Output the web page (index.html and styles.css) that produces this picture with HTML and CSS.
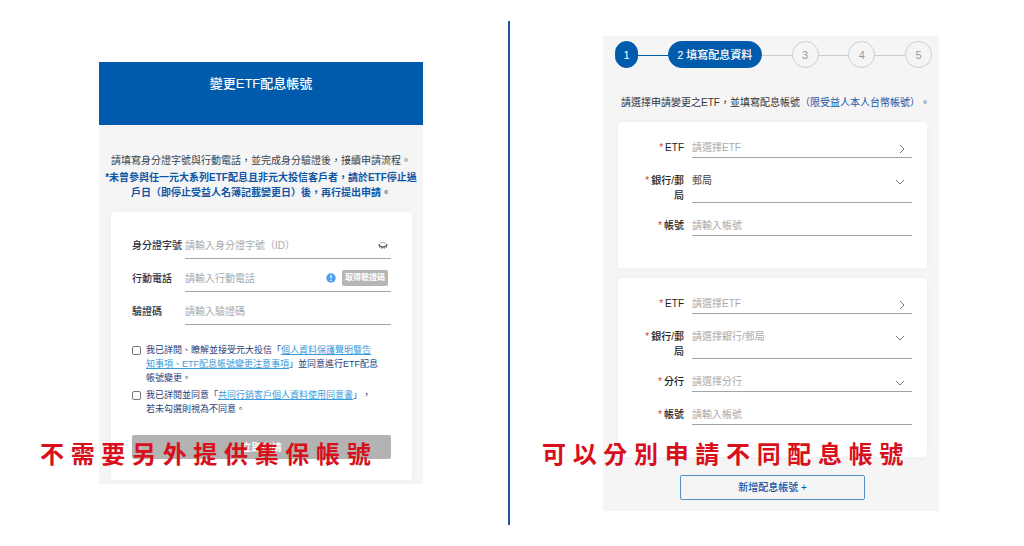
FILE: index.html
```html
<!DOCTYPE html>
<html lang="zh-Hant">
<head>
    <meta charset="UTF-8">
    <meta name="viewport" content="width=device-width, initial-scale=1.0">
    <title>變更ETF配息帳號</title>
    <link rel="stylesheet" href="styles.css">
</head>
<body>
    <main class="compare">
        <!-- Identity check -->
        <section class="side">
            <div class="panel verify">
                <header class="verify-header">
                    <h1 class="verify-title">變更ETF配息帳號</h1>
                </header>
                <div class="intro">
                    <p>請填寫身分證字號與行動電話，並完成身分驗證後，接續申請流程。</p>
                    <p class="intro-note">*未曾參與任一元大系列ETF配息且非元大投信客戶者，請於ETF停止過戶日（即停止受益人名簿記載變更日）後，再行提出申請。</p>
                </div>
                <form class="card verify-card">
                    <div class="row">
                        <label for="idNumber">身分證字號</label>
                        <div class="control">
                            <input type="text" id="idNumber" placeholder="請輸入身分證字號（ID）">
                            <button type="button" class="icon-button" aria-label="顯示">
                                <svg width="10" height="9" viewBox="0 0 10 9" fill="none">
                                    <path d="M1 4C2 .5 8 .5 9 4" stroke="#999" stroke-width=".8"/>
                                    <path d="M.8 3.500C2 7 8 7 9.200 3.500" stroke="#444" stroke-width="1.100"/>
                                    <path d="M2 5.500L1.200 6.800M4 6.300L3.700 7.900M6 6.300L6.300 7.900M8 5.500L8.800 6.800" stroke="#666" stroke-width=".8"/>
                                </svg>
                            </button>
                        </div>
                    </div>
                    <div class="row">
                        <label for="phone">行動電話</label>
                        <div class="control">
                            <input type="text" id="phone" placeholder="請輸入行動電話">
                            <svg class="info" width="10" height="10" viewBox="0 0 10 10">
                                <circle cx="5" cy="5" r="4.700" fill="#4f9fee"/>
                                <path d="M5 2v3.500M5 6.800v1.200" stroke="#fff" stroke-width="1.300"/>
                            </svg>
                            <button type="button" class="code-button">取得驗證碼</button>
                        </div>
                    </div>
                    <div class="row">
                        <label for="code">驗證碼</label>
                        <div class="control">
                            <input type="text" id="code" placeholder="請輸入驗證碼">
                        </div>
                    </div>

                    <div class="terms">
                        <div class="term">
                            <input type="checkbox" id="agreePrivacy">
                            <label for="agreePrivacy">我已詳閱、瞭解並接受元大投信「<a href="#">個人資料保護聲明暨告知事項、ETF配息帳號變更注意事項</a>」並同意進行ETF配息帳號變更。</label>
                        </div>
                        <div class="term">
                            <input type="checkbox" id="agreeMarketing">
                            <label for="agreeMarketing">我已詳閱並同意「<a href="#">共同行銷客戶個人資料使用同意書</a>」，若未勾選則視為不同意。</label>
                        </div>
                    </div>
                    <button type="submit" class="submit">立即申請</button>
                </form>
            </div>
            <p class="caption caption-left">不 需 要 另 外 提 供 集 保 帳 號</p>
        </section>

        <div class="divider"></div>

        <!-- Payout accounts -->
        <section class="side">
            <div class="panel payout">
                <ol class="steps">
                    <li class="step done">1</li>
                    <li class="step active">2 填寫配息資料</li>
                    <li class="step">3</li>
                    <li class="step">4</li>
                    <li class="step">5</li>
                </ol>
                <p class="hint">請選擇申請變更之ETF，並填寫配息帳號<span>（限受益人本人台幣帳號）</span>。</p>

                <form class="accounts">
                    <div class="card account">
                        <div class="row">
                            <label for="etf1"><i>*</i>ETF</label>
                            <div class="control">
                                <input type="text" id="etf1" placeholder="請選擇ETF" readonly>
                                <svg class="arrow" width="6" height="10" viewBox="0 0 6 10"><path d="M1 1l4 4-4 4"/></svg>
                            </div>
                        </div>
                        <div class="row">
                            <label for="bank1"><i>*</i>銀行/郵局</label>
                            <div class="control">
                                <select id="bank1">
                                    <option>郵局</option>
                                </select>
                                <svg class="arrow" width="10" height="10" viewBox="0 0 10 10"><path d="M1 3l4 4 4-4"/></svg>
                            </div>
                        </div>
                        <div class="row">
                            <label for="account1"><i>*</i>帳號</label>
                            <div class="control">
                                <input type="text" id="account1" placeholder="請輸入帳號">
                            </div>
                        </div>
                    </div>

                    <div class="card account">
                        <div class="row">
                            <label for="etf2"><i>*</i>ETF</label>
                            <div class="control">
                                <input type="text" id="etf2" placeholder="請選擇ETF" readonly>
                                <svg class="arrow" width="6" height="10" viewBox="0 0 6 10"><path d="M1 1l4 4-4 4"/></svg>
                            </div>
                        </div>
                        <div class="row">
                            <label for="bank2"><i>*</i>銀行/郵局</label>
                            <div class="control">
                                <select id="bank2" class="empty">
                                    <option>請選擇銀行/郵局</option>
                                </select>
                                <svg class="arrow" width="10" height="10" viewBox="0 0 10 10"><path d="M1 3l4 4 4-4"/></svg>
                            </div>
                        </div>
                        <div class="row">
                            <label for="branch2"><i>*</i>分行</label>
                            <div class="control">
                                <select id="branch2" class="empty">
                                    <option>請選擇分行</option>
                                </select>
                                <svg class="arrow" width="10" height="10" viewBox="0 0 10 10"><path d="M1 3l4 4 4-4"/></svg>
                            </div>
                        </div>
                        <div class="row">
                            <label for="account2"><i>*</i>帳號</label>
                            <div class="control">
                                <input type="text" id="account2" placeholder="請輸入帳號">
                            </div>
                        </div>
                    </div>
                    <button type="button" class="add-account">新增配息帳號 +</button>
                </form>
            </div>
            <p class="caption caption-right">可 以 分 別 申 請 不 同 配 息 帳 號</p>
        </section>
    </main>
</body>
</html>
```

FILE: styles.css
```css
* {
    box-sizing: border-box;
}

body {
    margin: 0;
    background-color: #fff;
    color: #3a4149;
    font-family: "Liberation Sans", "Noto Sans CJK TC", sans-serif;
    font-size: 10px;
    line-height: 15px;
    text-spacing-trim: space-all;
}

h1, p, ol {
    margin: 0;
    padding: 0;
}

input, select, button {
    font: inherit;
    color: inherit;
    margin: 0;
    padding: 0;
    border: 0;
    background: none;
}

.compare {
    display: grid;
    grid-template-columns: 1fr 2px 1fr;
    padding: 21px 6px 21px 0;
}

.divider {
    background-color: #1a56a0;
}

.side {
    position: relative;
    padding: 0 0 14px 14px;
}

.panel {
    margin: 0 auto;
    background-color: #f5f5f6;
}

.card {
    background-color: #fff;
    border-radius: 4px;
    box-shadow: 0 0 8px rgba(0, 0, 0, 0.03);
}

.row {
    display: flex;
}

.control {
    display: flex;
    flex: 1;
    min-width: 0;
    border-bottom: 1px solid #a4a4a4;
}

.control input,
.control select {
    flex: 1;
    min-width: 0;
    outline: none;
    appearance: none;
}

.control input::placeholder,
.control .empty {
    color: #a9a9a9;
    opacity: 1;
}

/* Left panel */
.verify {
    max-width: 324px;
    margin-top: 41px;
    padding-bottom: 4px;
}

.verify-header {
    background-color: #005bac;
    padding: 12px 0 31px;
}

.verify-title {
    color: #fff;
    font-size: 13px;
    font-weight: 500;
    line-height: 20px;
    text-align: center;
}

.intro {
    padding: 28px 5px 12px;
    text-align: center;
}

.intro-note {
    margin-top: 2px;
    color: #0f56a5;
    font-weight: bold;
}

.verify-card {
    margin: 0 11px 0 12px;
    padding: 20px 21px 21px;
}

.verify-card .row {
    height: 27px;
    margin-bottom: 6px;
    line-height: 27px;
}

.verify-card .row label {
    flex: 0 0 53px;
    color: #26344a;
    font-weight: 500;
}

.verify-card .control {
    align-items: center;
}

.icon-button {
    display: flex;
    margin-right: 3px;
}

.info {
    margin-right: 6px;
}

.code-button {
    width: 46px;
    height: 16px;
    margin-right: 3px;
    border-radius: 2px;
    background-color: #b5b5b5;
    color: #fff;
    font-size: 8px;
    font-weight: bold;
    line-height: 16px;
}

.terms {
    margin-top: 18px;
    color: #1f3c78;
    font-size: 9px;
    line-height: 14px;
}

.term {
    display: flex;
    align-items: flex-start;
    gap: 5px;
    margin-bottom: 3px;
}

.term input {
    flex: none;
    width: 9px;
    height: 9px;
    margin-top: 3px;
    border: 1px solid #777;
    border-radius: 2px;
    appearance: none;
}

.term label {
    max-width: 233px;
}

.term a {
    color: #3a9bdc;
}

.submit {
    display: block;
    width: 100%;
    height: 24px;
    margin-top: 19px;
    border-radius: 2px;
    background-color: #b3b3b3;
    color: #fff;
    font-weight: bold;
}

/* Right panel */
.payout {
    max-width: 336px;
    margin-top: 15px;
    padding-bottom: 11px;
}

.steps {
    display: flex;
    justify-content: space-between;
    padding: 5px 7px 0 12px;
    list-style: none;
    font-size: 11px;
    background: linear-gradient(#c9cdd2, #c9cdd2) center 19px / 300px 1px no-repeat;
}

.step {
    width: 27px;
    height: 27px;
    border: 1px solid #c9cdd2;
    border-radius: 14px;
    background-color: #f5f5f6;
    color: #999;
    line-height: 26px;
    text-align: center;
}

.step.done,
.step.active {
    border-color: #005bac;
    background-color: #005bac;
    color: #fff;
}

.step.done {
    position: relative;
    width: 23px;
}

/* finished part of the track */
.step.done::after {
    content: "";
    position: absolute;
    left: 22px;
    top: 13px;
    width: 31px;
    height: 1px;
    background-color: #005bac;
}

.step.active {
    width: 94px;
    font-weight: 500;
}

.hint {
    padding: 27px 0 12px 18px;
    color: #333;
    white-space: nowrap;
}

.hint span {
    color: #0f56a5;
}

.accounts {
    display: flex;
    flex-direction: column;
    gap: 10px;
    padding: 0 12px 0 15px;
}

.account {
    display: flex;
    flex-direction: column;
    gap: 15px;
    padding: 18px 15px 32px 22px;
}

.account label {
    flex: 0 0 44px;
    margin-right: 8px;
    color: #222;
    font-weight: 500;
    text-align: right;
}

.account label i {
    margin-right: 2px;
    color: #d2421f;
    font-style: normal;
}

.account .control {
    min-height: 18px;
    align-items: flex-start;
}

.account input,
.account select {
    height: 15px;
    line-height: 15px;
}

.arrow {
    margin: 4px 7px 0 0;
    fill: none;
    stroke: #777;
}

.add-account {
    align-self: center;
    width: 60%;
    height: 25px;
    margin-top: 8px;
    border: 1px solid #5a8fc4;
    border-radius: 2px;
    color: #0f56a5;
    font-weight: 500;
}

/* Red captions lie over the panels */
.caption {
    position: absolute;
    top: 420px;
    color: #d7101c;
    font-size: 24px;
    font-weight: bold;
    line-height: 28px;
    white-space: nowrap;
}

.caption-left {
    left: 40px;
}

.caption-right {
    left: 32px;
}
```
